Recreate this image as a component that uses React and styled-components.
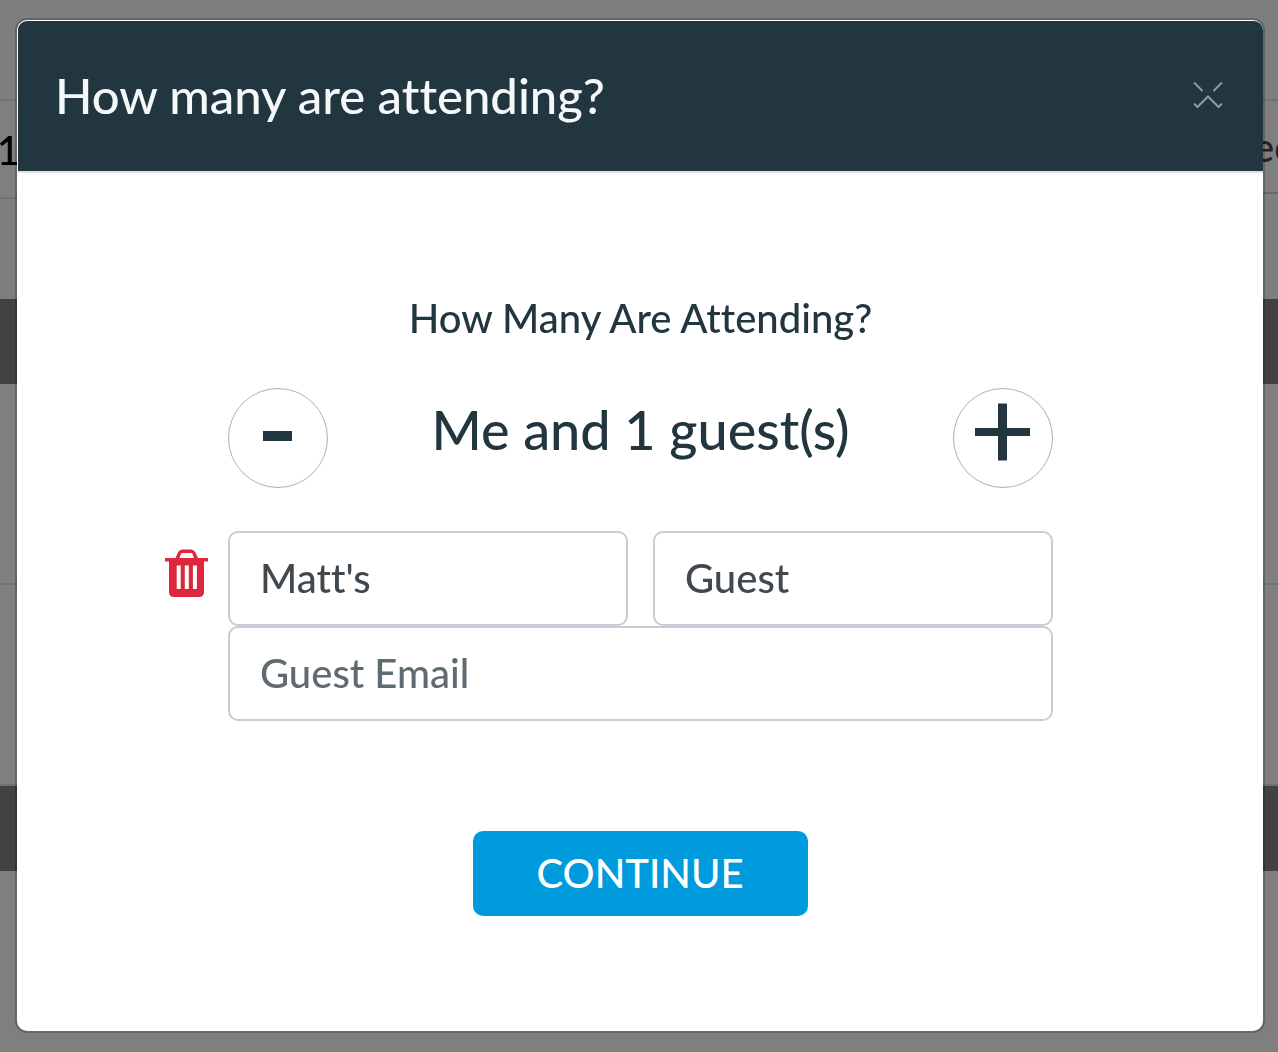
import React, { useState } from "react";
import styled, { createGlobalStyle } from "styled-components";

const GlobalStyle = createGlobalStyle`
  * {
    box-sizing: border-box;
  }
  body {
    margin: 0;
    background-color: #fff;
    color: #22363f;
    font-family: Lato, "Liberation Sans", sans-serif;
    font-weight: 500;
    font-variant-ligatures: none;
  }
  button,
  input {
    font: inherit;
    font-variant-ligatures: none;
  }
`;
const Page = styled.div`
  display: flex;
  flex-direction: column;
  min-height: 100vh;
`;
const Band = styled.div`
  height: ${(props) => props.$height}px;
  background-color: ${(props) => props.$color || "#fff"};
  border-bottom: ${(props) => (props.$line ? "2px solid #dfe5e4" : "none")};
`;
const TopRow = styled.div`
  display: flex;
  justify-content: space-between;
  height: 98px;
`;
const Cell = styled.div`
  display: flex;
  justify-content: ${(props) => props.$align};
  width: ${(props) => props.$width}px;
  height: ${(props) => props.$height}px;
  overflow: hidden;
  border-bottom: 2px solid ${(props) => props.$line};
  color: ${(props) => props.$color};
  font-size: 40px;
  line-height: ${(props) => props.$height}px;
`;
const Overlay = styled.div`
  position: fixed;
  inset: 0;
  overflow: auto;
  padding: 18px 13px 18px 15px;
  background-color: rgba(0, 0, 0, 0.5);
`;
const Modal = styled.section`
  border: 2px solid rgba(0, 0, 0, 0.2);
  border-radius: 12px;
  background-color: #fff;
  background-clip: padding-box;
  overflow: hidden;
  padding: 1px 0 0 1px;
`;
const Header = styled.header`
  display: flex;
  align-items: center;
  justify-content: space-between;
  height: 152px;
  padding: 0 40px 2px 37px;
  border-bottom: 2px solid #dbe1e5;
  border-radius: 9px 9px 0 0;
  background-color: #22363f;
  background-clip: padding-box;
`;
const Title = styled.h1`
  margin: 0;
  color: #f5f8fa;
  font-size: 49px;
  font-weight: 500;
`;
const CloseButton = styled.button`
  display: flex;
  padding: 0;
  border: none;
  background: none;
  cursor: pointer;
`;
const Form = styled.form`
  display: flex;
  flex-direction: column;
  align-items: center;
  padding: 118px 20px 115px;
`;
const Question = styled.h2`
  margin: 0 0 43px;
  font-size: 40px;
  font-weight: 500;
  line-height: 54px;
`;
const Counter = styled.div`
  display: flex;
  align-items: flex-start;
  justify-content: space-between;
  width: 100%;
  max-width: 825px;
  margin-bottom: 43px;
`;
const RoundButton = styled.button`
  display: flex;
  align-items: center;
  justify-content: center;
  width: 100px;
  height: 100px;
  padding: 0;
  border: 1px solid #a9b3ba;
  border-radius: 50%;
  background-color: #fff;
  cursor: pointer;
`;
const Count = styled.output`
  font-size: 54px;
  line-height: 84px;
`;
const Guest = styled.div`
  display: grid;
  grid-template-columns: 44px 1fr 44px;
  column-gap: 19px;
  width: 100%;
  max-width: 951px;
  margin-bottom: 110px;
`;
const DeleteButton = styled.button`
  align-self: start;
  display: flex;
  margin-top: 18px;
  padding: 0;
  border: none;
  background: none;
  cursor: pointer;
`;
const Fields = styled.div`
  display: grid;
  grid-template-columns: 1fr 1fr;
  column-gap: 25px;
`;
const Field = styled.input`
  grid-column: ${(props) => (props.$wide ? "1 / -1" : "auto")};
  width: 100%;
  min-width: 0;
  height: 95px;
  padding: 0 30px 2px;
  border: 2px solid #c7cdd4;
  border-radius: 10px;
  background-color: #fff;
  color: #41494f;
  font-size: 40px;
  &::placeholder {
    color: #5f6b70;
    opacity: 1;
  }
  &:focus {
    outline: none;
    border-color: #009bdd;
  }
`;
const ContinueButton = styled.button`
  height: 85px;
  padding: 0 64px 2px 63px;
  border: none;
  border-radius: 10px;
  background-color: #009bdd;
  color: #fff;
  font-size: 40px;
  text-transform: uppercase;
  cursor: pointer;
`;

function CloseIcon() {
  return (
    <svg width="30" height="28" viewBox="0 0 30 28" fill="none" stroke="#919b9f" strokeWidth="2">
      <path d="M1 1.5 9.5 10M29 1.5 20.5 10M1 22.5l3.5 3.5L15 15.5 25.5 26l3.500-3.500" />
    </svg>
  );
}
function TrashIcon() {
  return (
    <svg width="44" height="50" viewBox="0 0 44 50">
      <path
        fill="#de263d"
        fillRule="evenodd"
        d="M0 9h10.500l2.200-5q1.500-3.500 5-3.500h8q3.500 0 5 3.500l2.200 5H43v3.500h-4v30.500q0 5-5 5H9q-5 0-5-5V12.500H0zM14.500 9h14.500l-1.300-3.700q-.4-1.200-1.800-1.200h-8.300q-1.400 0-1.800 1.200zM11.700 16.500v23.500h4V16.500zM19.800 16.500v23.500h4V16.500zM27.900 16.500v23.500h4V16.500z"
      />
    </svg>
  );
}

export default function App() {
  const [open, setOpen] = useState(true);
  const [guests, setGuests] = useState(1);
  const [firstName, setFirstName] = useState("Matt's");
  const [lastName, setLastName] = useState("Guest");
  const [email, setEmail] = useState("");

  const removeGuest = () => {
    setGuests(Math.max(0, guests - 1));
  };
  const submitForm = (e) => {
    e.preventDefault();
    setOpen(false);
  };

  return (
    <>
      <GlobalStyle />
      <Page>
        <Band $height={101} $color="#fafffc" $line />
        <TopRow>
          <Cell $width={20} $height={98} $align="flex-end" $color="#000" $line="#dfe5e4">
            1
          </Cell>
          <Cell $width={25} $height={93} $align="flex-start" $color="#41494f" $line="#ccd0d6">
            ec
          </Cell>
        </TopRow>
        <Band $height={100} $color="#f9fefb" />
        <Band $height={85} $color="#848484" />
        <Band $height={201} $line />
        <Band $height={201} $line />
        <Band $height={85} $color="#848484" />
      </Page>
      {open ? (
        <Overlay>
          <Modal role="dialog" aria-modal="true" aria-labelledby="modal-title">
            <Header>
              <Title id="modal-title">How many are attending?</Title>
              <CloseButton aria-label="Close" onClick={() => setOpen(false)}>
                <CloseIcon />
              </CloseButton>
            </Header>
            <Form onSubmit={submitForm}>
              <Question>How Many Are Attending?</Question>
              <Counter>
                <RoundButton type="button" aria-label="Remove a guest" onClick={removeGuest}>
                  <svg width="60" height="60" viewBox="0 0 60 60">
                    <path fill="#22363f" d="M15 23h29v10H15z" />
                  </svg>
                </RoundButton>
                <Count>Me and {guests} guest(s)</Count>
                <RoundButton type="button" aria-label="Add a guest" onClick={() => setGuests(guests + 1)}>
                  <svg width="60" height="70" viewBox="0 0 60 70">
                    <path fill="#22363f" d="M25 .5h9V25h23v8H34v24.500h-9V33H2v-8h23z" />
                  </svg>
                </RoundButton>
              </Counter>
              {guests > 0 ? (
                <Guest>
                  <DeleteButton type="button" aria-label="Delete guest" onClick={removeGuest}>
                    <TrashIcon />
                  </DeleteButton>
                  <Fields>
                    <Field
                      aria-label="First name"
                      value={firstName}
                      onChange={(e) => setFirstName(e.target.value)}
                    />
                    <Field
                      aria-label="Last name"
                      value={lastName}
                      onChange={(e) => setLastName(e.target.value)}
                    />
                    <Field
                      $wide
                      type="email"
                      aria-label="Guest Email"
                      placeholder="Guest Email"
                      value={email}
                      onChange={(e) => setEmail(e.target.value)}
                    />
                  </Fields>
                </Guest>
              ) : null}
              <ContinueButton type="submit">Continue</ContinueButton>
            </Form>
          </Modal>
        </Overlay>
      ) : null}
    </>
  );
}
